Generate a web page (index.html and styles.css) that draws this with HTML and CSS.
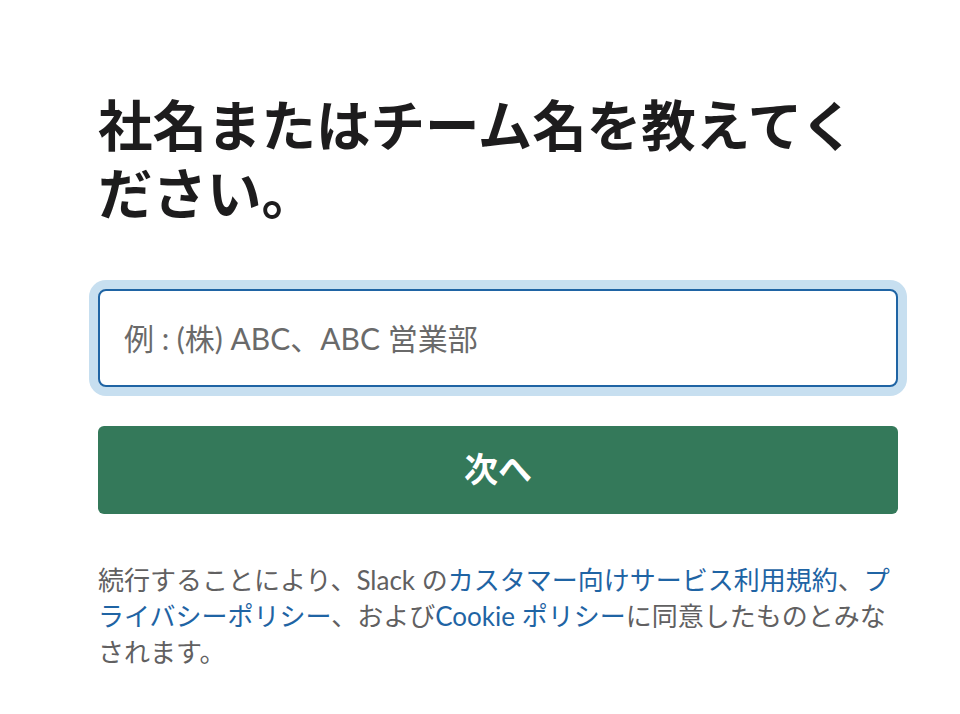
FILE: index.html
```html
<!DOCTYPE html>
<html lang="ja">
<head>
<meta charset="utf-8">
<title>社名またはチーム名</title>
<link rel="stylesheet" href="styles.css">
</head>
<body>
<main class="page">
  <h1 class="title">社名またはチーム名を教えてください。</h1>
  <form class="form">
    <div class="field">
      <input class="input" type="text" placeholder="例 : (株) ABC、ABC 営業部">
    </div>
    <button class="next" type="button">次へ</button>
  </form>
  <p class="terms">続行することにより、Slack の<a class="link" href="#">カスタマー向けサービス利用規約</a>、<a class="link" href="#">プライバシーポリシー</a>、および<a class="link" href="#">Cookie ポリシー</a>に同意したものとみなされます。</p>
</main>
</body>
</html>
```

FILE: styles.css
```css
html, body {
  margin: 0;
  padding: 0;
  background: #ffffff;
}
body {
  font-family: Lato, "Noto Sans CJK JP", sans-serif;
  color: #1d1c1d;
}
.page {
  width: 800px;
  padding: 91px 0 0 98px;
}
.title {
  margin: 0;
  font-size: 54.5px;
  line-height: 68px;
  font-weight: 700;
  color: #1d1c1d;
}
.form {
  margin-top: 62px;
  display: flex;
  flex-direction: column;
  gap: 39px;
}
.field {
  display: flex;
}
.input {
  box-sizing: border-box;
  width: 800px;
  height: 98px;
  margin: 0;
  padding: 0 24px;
  border: 2px solid #1f64a4;
  border-radius: 8px;
  box-shadow: 0 0 0 9px #c7dff0;
  font-family: Lato, "Noto Sans CJK JP", sans-serif;
  font-size: 30px;
  color: #1d1c1d;
  outline: none;
  background: #ffffff;
}
.input::placeholder {
  color: #6a6a6a;
  opacity: 1;
}
.next {
  box-sizing: border-box;
  width: 800px;
  height: 88px;
  margin: 0;
  padding: 0 0 6px;
  border: none;
  border-radius: 6px;
  background: #34795a;
  color: #ffffff;
  font-family: Lato, "Noto Sans CJK JP", sans-serif;
  font-size: 34px;
  font-weight: 700;
  cursor: pointer;
}
.terms {
  margin: 48px 0 0;
  font-size: 26px;
  line-height: 36px;
  color: #616061;
}
.link {
  color: #1f64a4;
  text-decoration: none;
}
```
